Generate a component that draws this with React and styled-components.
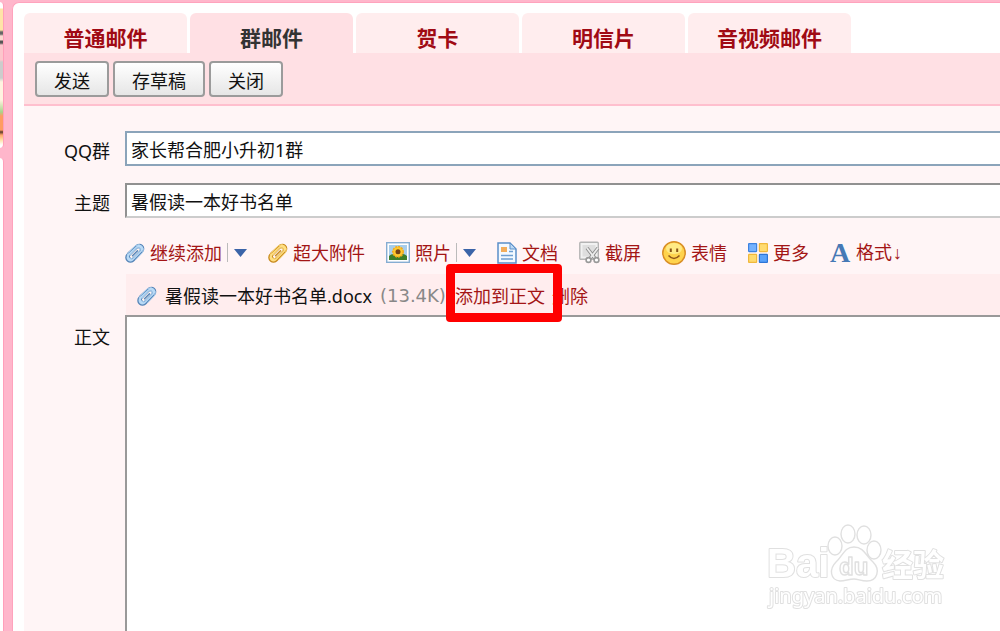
import React from 'react';
import styled, { createGlobalStyle } from 'styled-components';

const GlobalStyle = createGlobalStyle`
    * { box-sizing: border-box; }
    body {
        margin: 0;
        background: #ffb6cb;
        color: #111;
        font: 18px/24px "Noto Sans", "Noto Sans CJK SC", sans-serif;
    }
    button, input, textarea { font: inherit; color: inherit; }
`;

const Page = styled.div`
    display: flex;
    gap: 8px;
    min-height: 100vh;
    padding-top: 2px;
    overflow: hidden;
`;

const Sidebar = styled.aside`
    display: flex;
    flex-direction: column;
    gap: 10px;
    flex: 0 0 4px;
`;

const ProfileCard = styled.div`
    height: 146px;
    border-right: 1px solid #ff9fba;
    border-radius: 0 4px 4px 0;
    background: linear-gradient(#fff 0 6px, #ffe3a8 7px 28px, #666 30px 32px, #fbd9d0 34px 38px, #555 39px 41px, #fcc6cc 43px 58px, #ccc 60px 76px, #fff3e0 80px 98px, #a9d38c 110px, #ff9c63 114px 128px, #5a3a2a 130px, #ffa66b 133px, #ffe0a8 138px, #fff 143px);
`;

const MenuCard = styled.div`
    flex: 1;
    border-right: 1px solid #ff9fba;
    border-radius: 0 5px 0 0;
    background: #fff;
`;

const Main = styled.main`
    flex: 1;
    min-width: 0;
    display: flex;
    flex-direction: column;
    padding: 10px 0 0 11px;
    border: solid #ffa3bd;
    border-width: 1px 0 0 1px;
    border-radius: 7px 0 0 0;
    background: #fff;
`;

const Tabs = styled.nav`
    display: flex;
    gap: 3px;
`;

const Tab = styled.button`
    width: 163px;
    height: 40px;
    padding: 10px 0 0;
    border: 0;
    border-radius: 6px 6px 0 0;
    background: ${props => props.$active ? '#ffe0e4' : '#ffedee'};
    color: ${props => props.$active ? '#333' : '#a00a14'};
    font-size: 21px;
    font-weight: bold;
    line-height: 30px;
`;

const Actions = styled.div`
    display: flex;
    gap: 4px;
    padding: 8px 11px 7px;
    border-bottom: 2px solid #ffbfce;
    background: #ffe0e4;
`;

const ActionButton = styled.button`
    height: 36px;
    padding: 3px 17px 0;
    border: 2px solid #9b9b9b;
    border-radius: 4px;
    background: linear-gradient(#fff, #e6e6e6);
    line-height: 28px;
`;

const Form = styled.form`
    flex: 1;
    display: grid;
    grid-template-columns: 86px 1fr;
    grid-template-rows: auto auto auto auto 1fr;
    column-gap: 15px;
    padding-top: 25px;
    background: #fff5f6;
`;

const Label = styled.label`
    padding-top: 8px;
    text-align: right;
`;

const Field = styled.input`
    width: 100%;
    height: 35px;
    margin-bottom: 17px;
    padding: 0 4px;
    border: 2px solid;
    border-color: ${props => props.$focused ? '#8ba4ba' : '#919191 #ccc #ccc #919191'};
    border-right: 0;
    border-radius: 0;
    background: #fff;
    outline: 0;
`;

const Tools = styled.div`
    grid-column: 2;
    display: flex;
    gap: 21px;
    height: 39px;
    padding-bottom: 4px;
    white-space: nowrap;
`;

const Tool = styled.div`
    display: flex;
    align-items: center;
`;

const Link = styled.a`
    display: flex;
    align-items: center;
    gap: 5px;
    color: #a31515;
    text-decoration: none;
`;

const DownMark = styled.span`
    font-family: "Liberation Mono", monospace;
`;

const MoreButton = styled.button`
    display: flex;
    margin-left: 5px;
    padding: 6px 0 5px 6px;
    border: 0;
    border-left: 1px solid #bbb;
    background: none;
`;

const Attachment = styled.div`
    grid-column: 2;
    display: flex;
    align-items: center;
    height: 41px;
    margin-left: 1px;
    padding: 2px 0 0 11px;
    background: #ffedee;
    white-space: nowrap;
`;

const FileName = styled.span`
    margin-left: 8px;
`;

const FileSize = styled.span`
    margin: 0 9px 0 8px;
    color: #888;
    font-family: "DejaVu Sans", sans-serif;
`;

const Marked = styled.span`
    position: relative;
    margin-right: 7px;

    &::after {
        content: '';
        position: absolute;
        inset: -20px -17px -14px -9px;
        border: 9px solid #f00;
        border-radius: 4px;
        pointer-events: none;
        z-index: 1;
    }
`;

const Body = styled.textarea`
    display: block;
    width: 100%;
    height: 100%;
    min-height: 310px;
    padding: 4px;
    border: solid #999;
    border-width: 2px 0 0 2px;
    border-radius: 0;
    background: #fff;
    outline: 0;
    resize: none;
`;

const BodyLabel = styled(Label)`
    padding-top: 10px;
`;

const Watermark = styled.svg`
    position: fixed;
    right: 48px;
    bottom: 20px;
    pointer-events: none;
`;

const Clip = ({ gold }) => {
    const edge = gold ? '#c98a1c' : '#5585b8';
    const fill = gold ? '#ffdf83' : '#b9daf6';
    const wire = 'M5 12 L11.5 5.3 a2.1 2.1 0 0 1 3 3 L8.4 14.6 a3.5 3.5 0 0 1-5-5 L10.4 2.8 a5 5 0 0 1 7 7 L11 16.5';

    return (
        <svg width="20" height="20" viewBox="0 0 20 20" fill="none" strokeLinecap="round" strokeLinejoin="round">
            <path d="M3 10 L11 2.8 a4.4 4.4 0 0 1 6.5 6 L9 17.5 a4.6 4.6 0 0 1-7-6z" fill={fill} stroke={edge} strokeWidth="1.3" />
            <path d="M6.5 13.5 L13.2 6.8" stroke={edge} strokeWidth="5" />
            <path d="M6.5 13.5 L13.2 6.8" stroke="#fff4f2" strokeWidth="3" />
            <path d="M7.5 12.8 L12.5 7.8" stroke={edge} strokeWidth="1.4" />
            <path d={wire} stroke={fill} strokeWidth=".8" />
        </svg>
    );
};

const Photo = () => (
    <svg width="24" height="21" viewBox="0 0 24 21">
        <rect x=".7" y=".7" width="22.6" height="19.6" fill="#fff" stroke="#86add2" strokeWidth="1.4" />
        <rect x="3" y="3" width="18" height="15" fill="#a8cdea" />
        <path d="M3 14 Q7 10 12 14 Q17 10 21 14 V18 H3z" fill="#3d7e2a" />
        <circle cx="12" cy="9.8" r="5.2" fill="#ffc92e" stroke="#f3a91b" strokeWidth="1.5" strokeDasharray="2 1" />
        <circle cx="12" cy="9.8" r="2.5" fill="#744015" />
    </svg>
);

const Doc = () => (
    <svg width="20" height="22" viewBox="0 0 20 22">
        <path d="M1 1 H13 L19 7 V21 H1z" fill="#f3f9ff" stroke="#5b8fc9" strokeWidth="1.5" />
        <path d="M13 1 V7 H19z" fill="#bcd9f5" stroke="#5b8fc9" />
        <rect x="4" y="5" width="6" height="5" fill="#f3ad5b" />
        <path d="M12 9.5 H16 M4 13.5 H16 M4 17 H16" stroke="#6f9fd1" strokeWidth="1.4" />
    </svg>
);

const Snip = () => (
    <svg width="21" height="23" viewBox="0 0 21 23" fill="none">
        <rect x=".8" y="1.3" width="18.5" height="17" rx="1" fill="#f1f1f1" stroke="#b4b4b4" strokeWidth="1.4" />
        <rect x="3.5" y="4" width="13" height="11.5" fill="#dedede" />
        <path d="M8 7 L16 17.5 M19 7 L11 17.5" stroke="#8c8c8c" strokeWidth="3.6" />
        <path d="M8 7 L16 17.5 M19 7 L11 17.5" stroke="#ececec" strokeWidth="1.8" />
        <circle cx="9.5" cy="19" r="2.4" fill="#fff" stroke="#999" strokeWidth="1.6" />
        <circle cx="17.5" cy="19" r="2.4" fill="#fff" stroke="#999" strokeWidth="1.6" />
    </svg>
);

const Smile = () => (
    <svg width="24" height="26" viewBox="0 0 24 26">
        <circle cx="12" cy="13" r="11.2" fill="#ffd34d" stroke="#d98e26" strokeWidth="1.5" />
        <ellipse cx="12" cy="8.5" rx="8" ry="5.5" fill="#ffea85" />
        <path d="M8.8 8.5 V12 M15.2 8.5 V12" stroke="#8a5417" strokeWidth="2" />
        <path d="M6.5 15.5 Q12 21.5 17.5 15.5" fill="none" stroke="#94591a" strokeWidth="1.6" />
    </svg>
);

const Blocks = () => (
    <svg width="20" height="20" viewBox="0 0 20 20" strokeWidth="1.2">
        <rect x=".6" y=".6" width="8" height="8" rx=".5" fill="#74b2ff" stroke="#3d82e0" />
        <rect x="11.4" y=".6" width="8" height="8" rx=".5" fill="#ffdb70" stroke="#f0b83c" />
        <rect x=".6" y="11.4" width="8" height="8" rx=".5" fill="#ffdb70" stroke="#f0b83c" />
        <rect x="11.4" y="11.4" width="8" height="8" rx=".5" fill="#59a2fa" stroke="#2e75d6" />
    </svg>
);

const LetterIcon = styled.span`
    width: 21px;
    color: #4679b5;
    font: bold 28px/24px "Liberation Serif", serif;
`;

const Arrow = () => (
    <svg width="13" height="8" viewBox="0 0 13 8">
        <path d="M0 0 H13 L6.5 8z" fill="#3b64a8" />
    </svg>
);

const tabs = ['普通邮件', '群邮件', '贺卡', '明信片', '音视频邮件'];

const tools = [
    { name: '继续添加', icon: <Clip />, more: true },
    { name: '超大附件', icon: <Clip gold /> },
    { name: '照片', icon: <Photo />, more: true },
    { name: '文档', icon: <Doc /> },
    { name: '截屏', icon: <Snip /> },
    { name: '表情', icon: <Smile /> },
    { name: '更多', icon: <Blocks /> },
    { name: '格式', icon: <LetterIcon aria-hidden="true">A</LetterIcon>, down: true },
];

const BaiduMark = () => (
    <Watermark width="186" height="94" viewBox="0 0 186 94" fill="#fff" stroke="#e0e0e0" strokeWidth="2" strokeLinejoin="round">
        <g paintOrder="stroke" fontFamily='"Liberation Sans", "Noto Sans CJK SC", sans-serif' fontWeight="bold">
            <text x="1" y="60" fontSize="40">Bai</text>
            <text x="116" y="59" fontSize="31">经验</text>
        </g>
        <g strokeWidth="1.4">
            <ellipse cx="69" cy="29" rx="7" ry="9" />
            <ellipse cx="82" cy="17" rx="7" ry="9" />
            <ellipse cx="98" cy="18" rx="7" ry="9" />
            <ellipse cx="108" cy="33" rx="7" ry="9" />
            <path d="M88 30 C98 30 100 39 107 45 C115 53 111 64 101 64 C95 64 92 62 88 62 C83 62 79 64 74 64 C64 63 63 52 70 45 C77 39 78 30 88 30z" />
        </g>
        <text x="73" y="58" fontSize="24" fontWeight="bold" fontFamily='"Liberation Sans", sans-serif' strokeWidth="1.4">du</text>
        <text x="3" y="86" fontSize="20" fontFamily='"Noto Sans", sans-serif' paintOrder="stroke">jingyan.baidu.com</text>
    </Watermark>
);

const App = () => {
    const [activeTab, setActiveTab] = React.useState(1);
    const [group, setGroup] = React.useState('家长帮合肥小升初1群');
    const [subject, setSubject] = React.useState('暑假读一本好书名单');

    return (
        <Page>
            <GlobalStyle />
            <Sidebar>
                <ProfileCard />
                <MenuCard />
            </Sidebar>
            <Main>
                <Tabs>
                    {tabs.map((tab, index) => (
                        <Tab key={tab} $active={activeTab === index} onClick={() => setActiveTab(index)}>{tab}</Tab>
                    ))}
                </Tabs>
                <Actions>
                    <ActionButton>发送</ActionButton>
                    <ActionButton>存草稿</ActionButton>
                    <ActionButton>关闭</ActionButton>
                </Actions>
                <Form onSubmit={(ev) => ev.preventDefault()}>
                    <Label htmlFor="group">QQ群</Label>
                    <Field id="group" type="text" $focused value={group} onChange={(ev) => setGroup(ev.target.value)} />
                    <Label htmlFor="subject">主题</Label>
                    <Field id="subject" type="text" value={subject} onChange={(ev) => setSubject(ev.target.value)} />
                    <Tools>
                        {tools.map(tool => (
                            <Tool key={tool.name}>
                                <Link href="#">
                                    {tool.icon}
                                    <span>{tool.name}{tool.down && <DownMark>↓</DownMark>}</span>
                                </Link>
                                {tool.more && <MoreButton type="button" aria-label={tool.name}><Arrow /></MoreButton>}
                            </Tool>
                        ))}
                    </Tools>
                    <Attachment>
                        <Clip />
                        <FileName>暑假读一本好书名单.docx</FileName>
                        <FileSize>(13.4K)</FileSize>
                        <Marked><Link href="#">添加到正文</Link></Marked>
                        <Link href="#">删除</Link>
                    </Attachment>
                    <BodyLabel htmlFor="body">正文</BodyLabel>
                    <Body id="body" />
                </Form>
            </Main>
            <BaiduMark />
        </Page>
    );
};

export default App;
